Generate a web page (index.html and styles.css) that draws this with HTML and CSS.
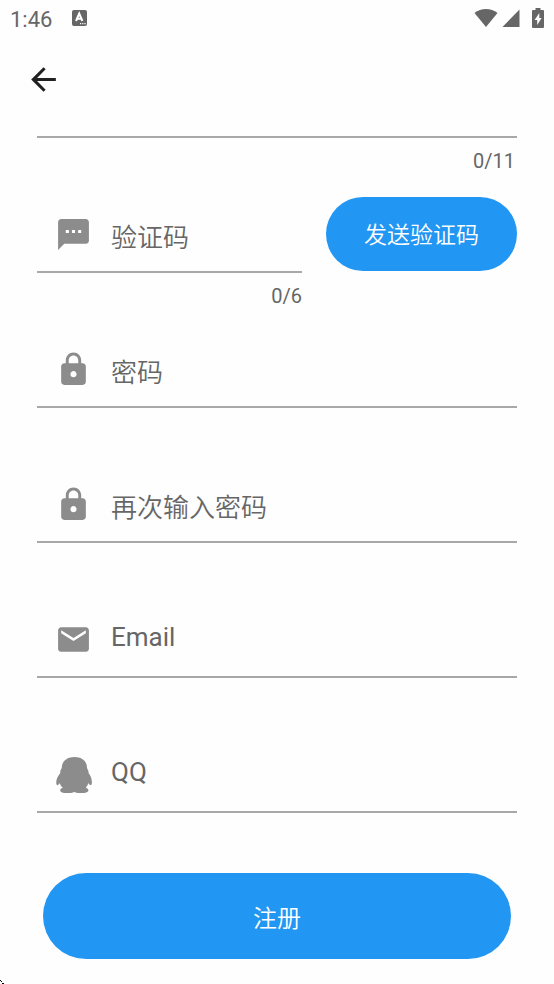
FILE: index.html
```html
<!DOCTYPE html>
<html lang="zh-CN">
<head>
<meta charset="utf-8">
<meta name="viewport" content="width=device-width, initial-scale=1">
<title>注册</title>
<link rel="stylesheet" href="styles.css">
</head>
<body>
<header class="status">
  <span class="time">1:46</span>
  <svg class="badge" viewBox="0 0 16 16" aria-hidden="true"><rect width="15" height="16" rx="2" fill="#666"/><path d="M4 11 7.200 3.500 10.400 11M5.200 8.700h4" fill="none" stroke="#fff" stroke-width="2"/><path d="M8 13.700h1.200M10.200 13.700h1.200M12.400 13.700h1.200" stroke="#fff" stroke-width="1.200"/></svg>
  <span class="signals">
    <svg width="24" height="20" viewBox="0 0 24 20" aria-hidden="true"><path d="M.5 5C7-.5 17-.5 23.500 5L12 19Z"/></svg>
    <svg width="18" height="20" viewBox="0 0 18 20" aria-hidden="true"><path d="M.5 19 17.500 1.500V19Z"/></svg>
    <svg width="12" height="20" viewBox="0 0 12 20" aria-hidden="true"><path fill-rule="evenodd" d="M3.500 0h5v2H11q1 0 1 1v16q0 1-1 1H1q-1 0-1-1V3q0-1 1-1h2.500ZM7.300 5 2.600 12H5.200V17L9.600 10H7.300Z"/></svg>
  </span>
</header>
<nav class="appbar">
  <button class="back" type="button" aria-label="返回"><svg class="icon" viewBox="0 0 24 24"><path d="M20 11H7.830l5.590-5.590L12 4l-8 8 8 8 1.410-1.410L7.830 13H20v-2z"/></svg></button>
</nav>
<form class="form">
  <div class="field">
    <div class="edge"></div>
    <p class="helper inset">0/11</p>
  </div>
  <div class="row">
    <div class="field">
      <label class="control">
        <svg class="icon" viewBox="0 0 24 24" aria-hidden="true"><path d="M20 2H4c-1.100 0-1.990.9-1.990 2L2 22l4-4h14c1.100 0 2-.9 2-2V4c0-1.100-.9-2-2-2zM9 11H7V9h2v2zm4 0h-2V9h2v2zm4 0h-2V9h2v2z"/></svg>
        <input type="text" inputmode="numeric" maxlength="6" placeholder="验证码" aria-label="验证码">
      </label>
      <p class="helper">0/6</p>
    </div>
    <button class="button send" type="button">发送验证码</button>
  </div>
  <div class="field">
    <label class="control">
      <svg class="icon" viewBox="0 0 24 24" aria-hidden="true"><path d="M18 8h-1V6c0-2.760-2.240-5-5-5S7 3.240 7 6v2H6c-1.100 0-2 .9-2 2v10c0 1.100.9 2 2 2h12c1.100 0 2-.9 2-2V10c0-1.100-.9-2-2-2zm-6 9c-1.100 0-2-.9-2-2s.9-2 2-2 2 .9 2 2-.9 2-2 2zm3.100-9H8.900V6c0-1.710 1.390-3.100 3.100-3.100 1.710 0 3.100 1.390 3.100 3.100v2z"/></svg>
      <input type="password" placeholder="密码" aria-label="密码">
    </label>
    <p class="helper"></p>
  </div>
  <div class="field">
    <label class="control">
      <svg class="icon" viewBox="0 0 24 24" aria-hidden="true"><path d="M18 8h-1V6c0-2.760-2.240-5-5-5S7 3.240 7 6v2H6c-1.100 0-2 .9-2 2v10c0 1.100.9 2 2 2h12c1.100 0 2-.9 2-2V10c0-1.100-.9-2-2-2zm-6 9c-1.100 0-2-.9-2-2s.9-2 2-2 2 .9 2 2-.9 2-2 2zm3.100-9H8.900V6c0-1.710 1.390-3.100 3.100-3.100 1.710 0 3.100 1.390 3.100 3.100v2z"/></svg>
      <input type="password" placeholder="再次输入密码" aria-label="再次输入密码">
    </label>
    <p class="helper"></p>
  </div>
  <div class="field">
    <label class="control">
      <svg class="icon" viewBox="0 0 24 24" aria-hidden="true"><path d="M20 4H4c-1.100 0-1.990.9-1.990 2L2 18c0 1.100.9 2 2 2h16c1.100 0 2-.9 2-2V6c0-1.100-.9-2-2-2zm0 4l-8 5-8-5V6l8 5 8-5v2z"/></svg>
      <input class="latin" type="email" placeholder="Email" aria-label="Email">
    </label>
    <p class="helper"></p>
  </div>
  <div class="field">
    <label class="control">
      <svg class="icon" viewBox="0 0 37 37" aria-hidden="true"><path d="M19.500 1C27.500 1 32 5.500 32 12C32.500 13.500 34 15 33.500 17C36 20 37.300 24 36.800 27.500C36.300 30 34.800 29.500 33.300 27C32.800 29 31.800 30.500 30.800 31.500C32.800 32.500 33.800 33.500 33.300 35C31.800 37.800 22.300 37.800 19.300 36C16.300 37.800 6.300 37.800 5.300 35C4.800 33.500 5.800 32.500 7.800 31.500C6.300 30.500 5.300 29 4.800 27C3.300 29.500 1.800 30 1.300 27.500C.8 24 2.800 20 5.300 17C5 15 5.800 13.500 6.800 12C6.800 5.500 11.500 1 19.500 1Z"/></svg>
      <input class="latin" type="text" placeholder="QQ" aria-label="QQ">
    </label>
    <p class="helper"></p>
  </div>
  <button class="button register" type="submit">注册</button>
</form>
<svg class="pointer" width="4" height="4" viewBox="0 0 4 4" shape-rendering="crispEdges" aria-hidden="true"><path d="M0 0h1v1H0zM1 1h1v1H1zM2 3h1v1H2zM3 3h1v1H3z"/></svg>
</body>
</html>
```
FILE: styles.css
```css
* {
  box-sizing: border-box;
}

body {
  margin: 0;
  position: relative;
  min-height: 100vh;
  background: #fefefe;
  color: #666;
  font-family: Roboto, "Noto Sans CJK SC", sans-serif;
}

svg {
  display: block;
  flex: none;
}

.status {
  display: flex;
  align-items: center;
  height: 36px;
  padding: 0 10px;
}

.time {
  padding-top: 4px;
  font-size: 22px;
  line-height: 36px;
}

.badge {
  width: 16px;
  height: 16px;
  margin-left: 20px;
}

.signals {
  display: flex;
  gap: 4px;
  margin-left: auto;
  fill: #666;
}

.signals svg:last-child {
  margin-left: 8px;
}

.icon {
  width: 37px;
  height: 37px;
  fill: #8c8c8c;
}

.appbar {
  display: flex;
  align-items: center;
  height: 87px;
  padding: 0 25px;
}

.back {
  padding: 0;
  border: 0;
  background: none;
}

.back .icon {
  fill: #212121;
}

.form {
  padding: 13px 37px 24px;
}

.edge {
  height: 2px;
  background: #a8a8a8;
}

.row {
  display: flex;
  align-items: flex-start;
  gap: 24px;
}

.row .field {
  flex: 1;
  min-width: 0;
}

.control {
  display: flex;
  align-items: center;
  gap: 19px;
  height: 75px;
  padding-left: 18px;
  border-bottom: 2px solid #a8a8a8;
}

input {
  flex: 1;
  min-width: 0;
  height: 73px;
  padding: 6px 0 0;
  border: 0;
  outline: 0;
  background: none;
  color: #333;
  font-family: Roboto, "Noto Sans CJK SC DemiLight", "Noto Sans CJK SC", sans-serif;
  font-size: 26px;
  font-weight: 350;
}

.latin {
  padding: 0 0 6px;
  font-weight: 400;
}

input::placeholder {
  color: #666;
  opacity: 1;
}

.helper {
  height: 60px;
  margin: 0;
  padding-top: 11px;
  font-size: 20px;
  line-height: 24px;
  text-align: right;
}

.inset {
  padding-right: 2px;
}

.button {
  border: 0;
  border-radius: 43px;
  background: #2196f3;
  color: #fff;
  font-family: Roboto, "Noto Sans CJK SC DemiLight", "Noto Sans CJK SC", sans-serif;
  font-weight: 350;
}

.send {
  height: 74px;
  margin-top: -1px;
  padding: 0 38px 2px;
  font-size: 23px;
}

.register {
  display: block;
  width: calc(100% - 12px);
  height: 86px;
  margin: 0 6px;
  font-size: 24px;
}

.pointer {
  position: absolute;
  left: 0;
  bottom: 0;
}
```
